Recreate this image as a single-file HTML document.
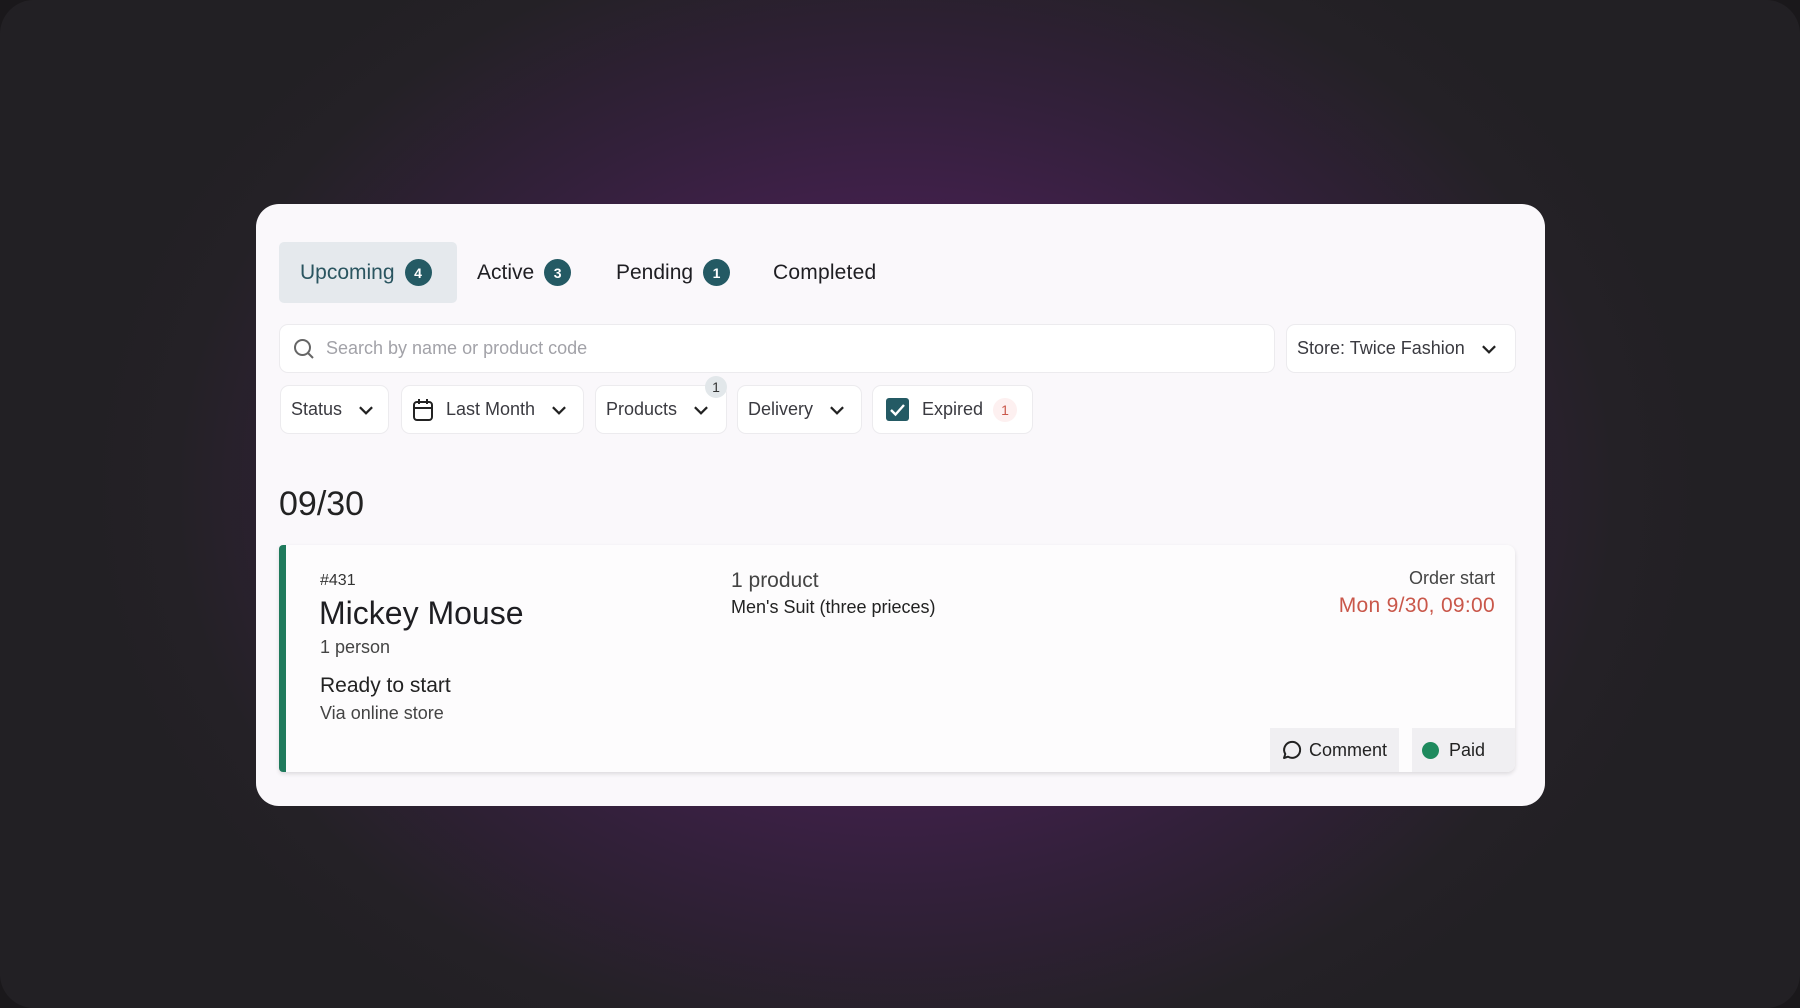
<!DOCTYPE html>
<html><head><meta charset="utf-8"><style>
*{margin:0;padding:0;box-sizing:border-box}
html,body{width:1800px;height:1008px;overflow:hidden;background:#1a181b}
body{font-family:"Liberation Sans",sans-serif;color:#222}
.bg{position:absolute;inset:0;border-radius:34px;background:radial-gradient(ellipse 820px 640px at 896px 490px,#5a1f66 0%,#4a1f55 30%,#33203b 62%,#242126 88%,#222024 100%)}
.panel{position:absolute;left:256px;top:204px;width:1289px;height:602px;background:#faf8fb;border-radius:23px}
.a{position:absolute}
.tab{position:absolute;top:242px;height:61px;display:flex;align-items:center;font-size:21px;color:#1e1e22}
.badge{display:inline-flex;width:27px;height:27px;border-radius:50%;background:#245a64;color:#fff;font-size:14px;font-weight:bold;align-items:center;justify-content:center;margin-left:10px}
.box{position:absolute;background:#fff;border:1px solid #ecebee;border-radius:9px;display:flex;align-items:center;font-size:18px;color:#3a3a40}
.chev{margin-left:14px}
</style></head><body>
<div class="bg"></div>
<div class="panel"></div>
<div class="a" style="left:279px;top:242px;width:178px;height:61px;background:#e5e9ed;border-radius:5px"></div>
<div class="tab" style="left:300px;color:#2a5560">Upcoming<span class="badge">4</span></div>
<div class="tab" style="left:477px">Active<span class="badge">3</span></div>
<div class="tab" style="left:616px">Pending<span class="badge">1</span></div>
<div class="tab" style="left:773px;letter-spacing:0.2px">Completed</div>

<div class="box" style="left:279px;top:324px;width:996px;height:49px;padding-left:12px;color:#a2a2a8">
<svg width="24" height="24" viewBox="0 0 24 24" fill="none" stroke="#666" stroke-width="2"><circle cx="10.5" cy="10.5" r="7.5"/><path d="M16 16l5 5"/></svg>
<span style="margin-left:10px">Search by name or product code</span></div>
<div class="box" style="left:1286px;top:324px;width:230px;height:49px;padding-left:10px">Store: Twice Fashion
<svg class="chev" style="margin-left:14px" width="20" height="20" viewBox="0 0 18 18" fill="none" stroke="#222" stroke-width="2"><path d="M3.5 6.5l5.5 5.5 5.5-5.5"/></svg></div>

<div class="box" style="left:280px;top:385px;width:109px;height:49px;padding-left:10px">Status<svg class="chev" width="20" height="20" viewBox="0 0 18 18" fill="none" stroke="#222" stroke-width="2"><path d="M3.5 6.5l5.5 5.5 5.5-5.5"/></svg></div>
<div class="box" style="left:401px;top:385px;width:183px;height:49px;padding-left:10px">
<svg width="22" height="24" viewBox="0 0 22 24" fill="none" stroke="#222" stroke-width="2"><rect x="2" y="4" width="18" height="18" rx="3"/><path d="M2 10h18M7 1v5M15 1v5"/></svg>
<span style="margin-left:12px">Last Month</span><svg class="chev" width="20" height="20" viewBox="0 0 18 18" fill="none" stroke="#222" stroke-width="2"><path d="M3.5 6.5l5.5 5.5 5.5-5.5"/></svg></div>
<div class="box" style="left:595px;top:385px;width:132px;height:49px;padding-left:10px">Products<svg class="chev" width="20" height="20" viewBox="0 0 18 18" fill="none" stroke="#222" stroke-width="2"><path d="M3.5 6.5l5.5 5.5 5.5-5.5"/></svg></div>
<div class="a" style="left:705px;top:376px;width:22px;height:22px;border-radius:50%;background:#e2e7ea;font-size:14px;display:flex;align-items:center;justify-content:center;color:#333">1</div>
<div class="box" style="left:737px;top:385px;width:125px;height:49px;padding-left:10px">Delivery<svg class="chev" width="20" height="20" viewBox="0 0 18 18" fill="none" stroke="#222" stroke-width="2"><path d="M3.5 6.5l5.5 5.5 5.5-5.5"/></svg></div>
<div class="box" style="left:872px;top:385px;width:161px;height:49px;padding-left:13px">
<svg width="23" height="23" viewBox="0 0 23 23"><rect width="23" height="23" rx="3" fill="#245a64"/><path d="M5 12l4.5 4.5L18 7" fill="none" stroke="#fff" stroke-width="2.4"/></svg>
<span style="margin-left:13px">Expired</span>
<span style="margin-left:10px;width:24px;height:24px;border-radius:50%;background:#fdf0f0;color:#c9574a;font-size:14px;display:inline-flex;align-items:center;justify-content:center">1</span></div>

<div class="a" style="left:279px;top:485px;font-size:34px;color:#222">09/30</div>

<div class="a" style="left:279px;top:545px;width:1236px;height:227px;background:#fdfcfd;border-radius:4px 8px 8px 4px;box-shadow:0 2px 4px rgba(0,0,0,0.12);overflow:hidden">
<div class="a" style="left:0;top:0;width:7px;height:100%;background:#1f7a5c"></div>
<div class="a" style="left:41px;top:27px;font-size:16px;color:#333">#431</div>
<div class="a" style="left:40px;top:50px;font-size:32px;color:#1e1e22">Mickey Mouse</div>
<div class="a" style="left:41px;top:92px;font-size:18px;color:#444">1 person</div>
<div class="a" style="left:41px;top:129px;font-size:21px;color:#222">Ready to start</div>
<div class="a" style="left:41px;top:158px;font-size:18px;color:#444">Via online store</div>
<div class="a" style="left:452px;top:24px;font-size:21px;color:#444">1 product</div>
<div class="a" style="left:452px;top:52px;font-size:18px;color:#222">Men's Suit (three prieces)</div>
<div class="a" style="right:20px;top:23px;font-size:18px;color:#444;text-align:right">Order start</div>
<div class="a" style="right:20px;top:49px;font-size:21px;color:#c9574a;text-align:right;letter-spacing:0.3px">Mon 9/30, 09:00</div>
<div class="a" style="left:991px;top:183px;width:129px;height:44px;background:#f0eff2;display:flex;align-items:center;padding-left:11px;font-size:18px;color:#222">
<svg width="22" height="22" viewBox="0 0 22 22" fill="none" stroke="#222" stroke-width="2"><path d="M3 19l1.3-4A8 8 0 1 1 7 17.7z" stroke-linejoin="round"/></svg><span style="margin-left:6px">Comment</span></div>
<div class="a" style="left:1133px;top:183px;width:103px;height:44px;background:#f0eff2;display:flex;align-items:center;padding-left:10px;font-size:18px;color:#222">
<span style="width:17px;height:17px;border-radius:50%;background:#1f8a5e;display:inline-block"></span><span style="margin-left:10px">Paid</span></div>
</div>
</body></html>
